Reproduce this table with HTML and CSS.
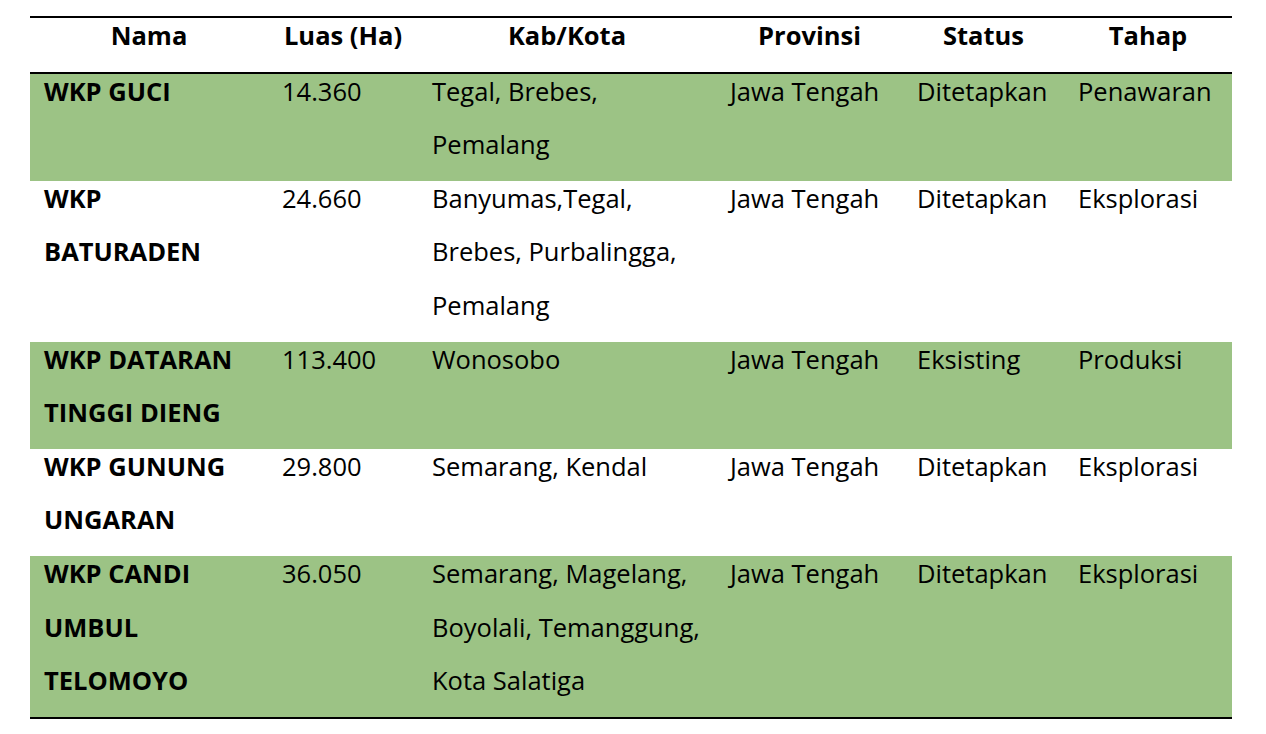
FILE: index.html
```html
<!DOCTYPE html>
<html lang="id">
<head>
<meta charset="utf-8">
<title>WKP Jawa Tengah</title>
<link rel="stylesheet" href="styles.css">
</head>
<body>
<table class="wkp">
  <colgroup>
    <col class="c-nama"><col class="c-luas"><col class="c-kab"><col class="c-prov"><col class="c-status"><col class="c-tahap">
  </colgroup>
  <thead>
    <tr>
      <th><div class="cell">Nama</div></th>
      <th><div class="cell">Luas (Ha)</div></th>
      <th><div class="cell">Kab/Kota</div></th>
      <th><div class="cell">Provinsi</div></th>
      <th><div class="cell">Status</div></th>
      <th><div class="cell">Tahap</div></th>
    </tr>
  </thead>
  <tbody>
    <tr class="green">
      <td class="name"><div class="cell">WKP GUCI</div></td>
      <td><div class="cell">14.360</div></td>
      <td><div class="cell">Tegal, Brebes,<br>Pemalang</div></td>
      <td><div class="cell">Jawa Tengah</div></td>
      <td><div class="cell">Ditetapkan</div></td>
      <td><div class="cell">Penawaran</div></td>
    </tr>
    <tr>
      <td class="name"><div class="cell">WKP<br>BATURADEN</div></td>
      <td><div class="cell">24.660</div></td>
      <td><div class="cell">Banyumas,Tegal,<br>Brebes, Purbalingga,<br>Pemalang</div></td>
      <td><div class="cell">Jawa Tengah</div></td>
      <td><div class="cell">Ditetapkan</div></td>
      <td><div class="cell">Eksplorasi</div></td>
    </tr>
    <tr class="green">
      <td class="name"><div class="cell">WKP DATARAN<br>TINGGI DIENG</div></td>
      <td><div class="cell">113.400</div></td>
      <td><div class="cell">Wonosobo</div></td>
      <td><div class="cell">Jawa Tengah</div></td>
      <td><div class="cell">Eksisting</div></td>
      <td><div class="cell">Produksi</div></td>
    </tr>
    <tr>
      <td class="name"><div class="cell">WKP GUNUNG<br>UNGARAN</div></td>
      <td><div class="cell">29.800</div></td>
      <td><div class="cell">Semarang, Kendal</div></td>
      <td><div class="cell">Jawa Tengah</div></td>
      <td><div class="cell">Ditetapkan</div></td>
      <td><div class="cell">Eksplorasi</div></td>
    </tr>
    <tr class="green last">
      <td class="name"><div class="cell">WKP CANDI<br>UMBUL<br>TELOMOYO</div></td>
      <td><div class="cell">36.050</div></td>
      <td><div class="cell">Semarang, Magelang,<br>Boyolali, Temanggung,<br>Kota Salatiga</div></td>
      <td><div class="cell">Jawa Tengah</div></td>
      <td><div class="cell">Ditetapkan</div></td>
      <td><div class="cell">Eksplorasi</div></td>
    </tr>
  </tbody>
</table>
</body>
</html>
```

FILE: styles.css
```css
html, body {
  margin: 0;
  padding: 0;
  background: #ffffff;
}

body {
  font-family: "Open Sans", "Liberation Sans", sans-serif;
  font-size: 25.5px;
  color: #000000;
}

.wkp {
  margin: 16px 0 0 30px;
  width: 1202px;
  border-collapse: collapse;
  table-layout: fixed;
  border-top: 2px solid #000;
  border-bottom: 2px solid #000;
}

.c-nama { width: 238px; }
.c-luas { width: 150px; }
.c-kab { width: 298px; }
.c-prov { width: 187px; }
.c-status { width: 161px; }
.c-tahap { width: 168px; }

.wkp th,
.wkp td {
  padding: 0 14px;
  vertical-align: top;
  line-height: 53.6px;
  white-space: nowrap;
  overflow: hidden;
}

.wkp th {
  font-weight: 700;
  text-align: center;
}

.wkp thead tr {
  border-bottom: 2px solid #000;
}

.wkp td {
  text-align: left;
  font-weight: 400;
}

.wkp td.name {
  font-weight: 700;
}

.cell {
  margin: -9px 0 9px 0;
}

.green {
  background: #9cc385;
}
```
